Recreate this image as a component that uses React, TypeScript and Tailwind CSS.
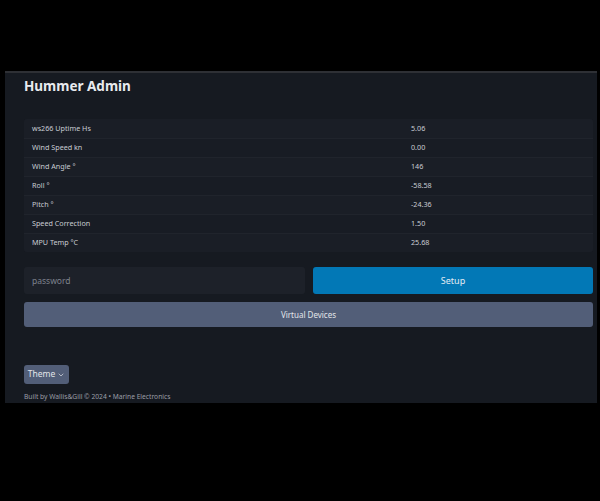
import { ChevronDown } from "lucide-react";

const rows: { label: string; value: string }[] = [
  { label: "ws266 Uptime Hs", value: "5.06" },
  { label: "Wind Speed kn", value: "0.00" },
  { label: "Wind Angle °", value: "146" },
  { label: "Roll °", value: "-58.58" },
  { label: "Pitch °", value: "-24.36" },
  { label: "Speed Correction", value: "1.50" },
  { label: "MPU Temp °C", value: "25.68" },
];

export default function App() {
  return (
    <div
      className="h-[501px] w-[600px] overflow-hidden bg-black pt-[71px]"
      style={{ fontFamily: '"Noto Sans", "Open Sans", sans-serif' }}
    >
      <div className="ml-[5px] w-[592px] border-t-2 border-[#2e3035] bg-[#161a21] pb-[1px] pl-[19px] pr-[4px] pt-[3px]">
        <h1 className="text-[13.5px] font-bold leading-[20px] text-[#e8eaee]">Hummer Admin</h1>

        <div className="mt-[23px] overflow-hidden rounded-[3px] bg-[#191d25]">
          <table className="w-full text-[7.2px] text-[#c9ccd3]">
            <tbody className="divide-y divide-[#20242c]">
              {rows.map((row, i) => (
                <tr key={row.label} className={i % 2 === 0 ? "h-[19px] bg-[#1a1e26]" : "h-[19px] bg-[#181c24]"}>
                  <td className="w-[387px] pl-[8px]">{row.label}</td>
                  <td>{row.value}</td>
                </tr>
              ))}
            </tbody>
          </table>
        </div>

        <div className="mt-[15px] flex gap-[8px]">
          <input
            type="password"
            placeholder="password"
            className="h-[27px] w-[281px] rounded-[3px] bg-[#1d2129] px-[8px] text-[8.5px] text-[#c9ccd3] outline-none placeholder:text-[#7d828d]"
          />
          <button
            type="button"
            className="h-[27px] flex-1 rounded-[3px] bg-[#0278b6] text-[9px] text-[#e2ecf4]"
          >
            Setup
          </button>
        </div>

        <button
          type="button"
          className="mt-[8px] h-[25px] w-full rounded-[3px] bg-[#525e78] text-[8px] text-[#e2e5ea]"
        >
          Virtual Devices
        </button>

        <div className="mt-[38px]">
          <button
            type="button"
            className="flex h-[19px] w-[45px] items-center justify-center gap-[2px] rounded-[3px] bg-[#525e78] text-[8.5px] text-[#e2e5ea]"
          >
            Theme
            <ChevronDown size={8} strokeWidth={2} />
          </button>
        </div>

        <p className="mt-[8px] text-[6.7px] leading-[10px] text-[#9a9ea7]">
          Built by Wallis&amp;Gill © 2024 • Marine Electronics
        </p>
      </div>
    </div>
  );
}
